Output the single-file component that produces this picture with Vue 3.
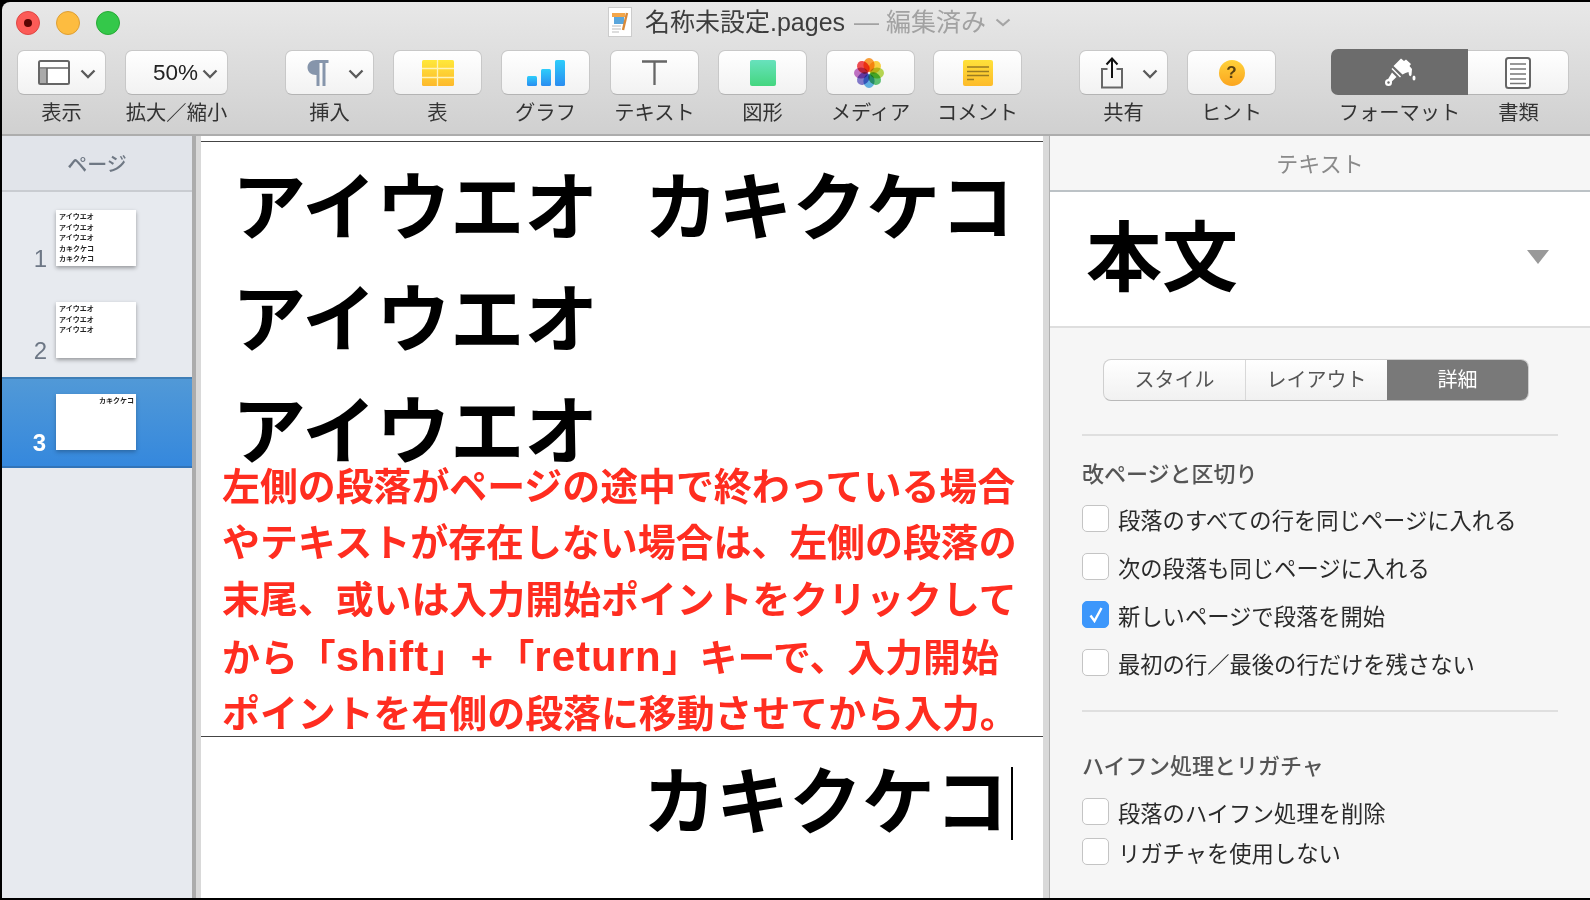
<script setup>
const tools = [
  { label: '表示', icon: 'view', chevron: true, w: 89, mr: 19 },
  { label: '拡大／縮小', icon: 'zoom', chevron: true, w: 103, mr: 57 },
  { label: '挿入', icon: 'para', chevron: true, w: 89, mr: 19 },
  { label: '表', icon: 'table', w: 89, mr: 19 },
  { label: 'グラフ', icon: 'chart', w: 89, mr: 20 },
  { label: 'テキスト', icon: 'text', w: 89, mr: 19 },
  { label: '図形', icon: 'shape', w: 89, mr: 19 },
  { label: 'メディア', icon: 'media', w: 89, mr: 18 },
  { label: 'コメント', icon: 'comment', w: 89, mr: 57 },
  { label: '共有', icon: 'share', chevron: true, w: 89, mr: 19 },
  { label: 'ヒント', icon: 'hint', w: 89, mr: 55 }
]
const petals = ['#fb9b2c', '#fdd23a', '#b6d84a', '#58c470', '#5cb2ea', '#7f76cf', '#c16bc4', '#f2454a']
const thumbs = [
  { n: 1, lines: ['アイウエオ', 'アイウエオ', 'アイウエオ', 'カキクケコ', 'カキクケコ'] },
  { n: 2, lines: ['アイウエオ', 'アイウエオ', 'アイウエオ'] },
  { n: 3, lines: ['カキクケコ'], right: true, selected: true }
]
const redLines = [
  [{ t: '左側の段落がページの途中で終わっている場合' }],
  [{ t: 'やテキストが存在しない場合は、左側の段落の' }],
  [{ t: '末尾、或いは入力開始ポイントをクリックして' }],
  [
    { t: 'から「' }, { t: 'shift', c: 'latin' }, { t: '」' }, { t: '+', c: 'plus' },
    { t: '「' }, { t: 'return', c: 'latin' }, { t: '」キーで、入力開始' }
  ],
  [{ t: 'ポイントを右側の段落に移動させてから入力。' }]
]
const breaks = [
  { t: '段落のすべての行を同じページに入れる' },
  { t: '次の段落も同じページに入れる' },
  { t: '新しいページで段落を開始', on: true },
  { t: '最初の行／最後の行だけを残さない' }
]
const hyph = ['段落のハイフン処理を削除', 'リガチャを使用しない']
</script>

<template>
  <div class="window">
    <header class="toolbar">
      <div class="titlebar">
        <div class="lights">
          <span class="light red"><i></i></span>
          <span class="light yellow"></span>
          <span class="light green"></span>
        </div>
        <div class="title">
          <svg class="docicon" width="24" height="30" viewBox="0 0 24 30">
            <rect x="0.5" y="0.5" width="23" height="29" fill="#fff" stroke="#ccc" />
            <rect x="4" y="6" width="13" height="4" fill="#f3a64a" />
            <rect x="6" y="10" width="10" height="7" fill="#5aa6dc" />
            <path d="M4 19h9M4 22h9M4 25h7" stroke="#bbb" stroke-width="1.2" />
            <path d="M19 6l-4 17" stroke="#d98a3a" stroke-width="2.4" />
          </svg>
          <span class="name">名称未設定.pages</span>
          <span class="dash">— 編集済み</span>
          <svg width="16" height="9" viewBox="0 0 16 9"><path d="M1.5 1.5L8 7l6.5-5.5" fill="none" stroke="#a5a5a5" stroke-width="2.2" /></svg>
        </div>
      </div>
      <div class="tools">
        <div v-for="t in tools" :key="t.label" class="tool" :style="{ width: t.w + 'px', marginRight: t.mr + 'px' }">
          <div class="btn" :class="{ 'has-chev': t.chevron }">
            <svg v-if="t.icon === 'view'" width="32" height="26" viewBox="0 0 32 26">
              <rect x="1" y="1" width="30" height="23" rx="1.5" fill="#fff" stroke="#666" stroke-width="2" />
              <rect x="2" y="9" width="7" height="14" fill="#aaa" />
              <path d="M1 8h30M9 8v16" stroke="#666" stroke-width="1.6" />
            </svg>
            <span v-else-if="t.icon === 'zoom'" class="zoomtxt">50%</span>
            <svg v-else-if="t.icon === 'para'" width="25" height="28" viewBox="0 0 24 28">
              <path d="M22 1H9.5C4.5 1 1 4 1 8.5S4.5 16 9.5 16H10V27h3V4h3v23h3V4h3z" fill="#8695ab" />
            </svg>
            <svg v-else-if="t.icon === 'table'" width="32" height="26" viewBox="0 0 32 26">
              <defs><linearGradient id="tg" x1="0" y1="0" x2="0" y2="1"><stop offset="0" stop-color="#ffe83a" /><stop offset="1" stop-color="#fdb92c" /></linearGradient></defs>
              <rect width="32" height="26" rx="1.5" fill="url(#tg)" />
              <path d="M15.5 0v26M0 8.5h32M0 17.5h32" stroke="#fff3b8" stroke-width="1.3" />
            </svg>
            <svg v-else-if="t.icon === 'chart'" width="38" height="26" viewBox="0 0 38 26">
              <defs><linearGradient id="cg" x1="0" y1="0" x2="0" y2="1"><stop offset="0" stop-color="#2ecdfb" /><stop offset="1" stop-color="#2a8df0" /></linearGradient></defs>
              <rect x="0" y="16" width="10" height="10" rx="1.5" fill="url(#cg)" />
              <rect x="14" y="9" width="10" height="17" rx="1.5" fill="url(#cg)" />
              <rect x="28" y="0" width="10" height="26" rx="1.5" fill="url(#cg)" />
            </svg>
            <svg v-else-if="t.icon === 'text'" width="26" height="26" viewBox="0 0 26 26">
              <path d="M0 1.5h25M12.5 1.5V25" stroke="#666" stroke-width="2.3" fill="none" />
            </svg>
            <span v-else-if="t.icon === 'shape'" class="shape"></span>
            <svg v-else-if="t.icon === 'media'" class="flower" width="30" height="30" viewBox="-15 -15 30 30">
              <g v-for="(c, i) in petals" :key="i" :transform="`rotate(${i * 45})`">
                <ellipse class="petal" cx="0" cy="-8" rx="5.600" ry="7" :fill="c" />
              </g>
            </svg>
            <svg v-else-if="t.icon === 'comment'" width="30" height="26" viewBox="0 0 30 26">
              <defs><linearGradient id="ng" x1="0" y1="0" x2="0" y2="1"><stop offset="0" stop-color="#ffe13a" /><stop offset="1" stop-color="#fdbb2a" /></linearGradient></defs>
              <rect width="30" height="26" rx="2" fill="url(#ng)" />
              <path d="M4 7h22M4 11.5h22M4 15.5h22M4 19.5h7" stroke="#9a7b22" stroke-width="1.7" />
            </svg>
            <svg v-else-if="t.icon === 'share'" width="24" height="32" viewBox="0 0 24 32">
              <path d="M7.5 12H2v18.500h20V12h-5.500" fill="none" stroke="#666" stroke-width="2" />
              <path d="M12 21V2M6.500 7.500L12 1.500l5.500 6" fill="none" stroke="#111" stroke-width="2" />
            </svg>
            <span v-else-if="t.icon === 'hint'" class="hint">?</span>
            <svg v-if="t.chevron" class="chev" width="16" height="10" viewBox="0 0 16 10"><path d="M1.5 1.500L8 8l6.500-6.500" fill="none" stroke="#5a5a5a" stroke-width="2.300" /></svg>
          </div>
          <span class="tool-label">{{ t.label }}</span>
        </div>
        <div class="seg-tool">
          <div class="seg-btns">
            <div class="seg-dark">
              <svg width="32" height="30" viewBox="0 0 32 30">
                <path d="M9.500 9L17 1.500l3 2.500 2-1.500 5 4.500-1.500 2 2.500 3-.5 6c-.5 1.500-2 1.500-2.500 0l-.5-3-3 1-3 1.500z" fill="#fff" />
                <path d="M7.500 12l8.500 8.500 1-1L8.500 11z" fill="#fff" />
                <path d="M8 15.500l4.500 4.500-6 5.800-3-2.800z" fill="#fff" />
                <circle cx="4.500" cy="25.500" r="3.500" fill="#fff" />
                <circle cx="4.500" cy="25.500" r="1.200" fill="#6c6c6c" />
                <ellipse cx="30" cy="21" rx="1.500" ry="2.500" fill="#fff" />
              </svg>
            </div>
            <div class="seg-light">
              <svg width="26" height="32" viewBox="0 0 26 32">
                <rect x="1" y="1" width="24" height="30" rx="2.500" fill="#fff" stroke="#666" stroke-width="2" />
                <path d="M5 7h16M5 12h16M5 17h16M5 22h16M5 26.500h16" stroke="#777" stroke-width="1.600" />
              </svg>
            </div>
          </div>
          <div class="seg-labels">
            <span class="tool-label lbl-a">フォーマット</span>
            <span class="tool-label lbl-b">書類</span>
          </div>
        </div>
      </div>
    </header>

    <div class="body">
      <aside class="sidebar">
        <div class="side-head">ページ</div>
        <div class="side-list">
          <div v-for="p in thumbs" :key="p.n" class="page-row" :class="{ selected: p.selected }">
            <span class="page-no">{{ p.n }}</span>
            <div class="thumb" :class="{ right: p.right }">
              <div v-for="(l, i) in p.lines" :key="i">{{ l }}</div>
            </div>
          </div>
        </div>
      </aside>

      <main class="canvas-wrap">
        <div class="canvas">
          <div class="page-part first">
            <div class="big"><span class="big-col">アイウエオ</span>カキクケコ</div>
            <div class="big">アイウエオ</div>
            <div class="big">アイウエオ</div>
            <div class="note">
              <div v-for="(l, i) in redLines" :key="i" class="note-line"><span v-for="(s, j) in l" :key="j" :class="s.c">{{ s.t }}</span></div>
            </div>
          </div>
          <div class="page-part second">
            <div class="big end">カキクケコ<span class="caret"></span></div>
          </div>
        </div>
      </main>

      <aside class="inspector">
        <div class="ins-head">テキスト</div>
        <div class="ins-style">
          <span class="style-name">本文</span>
          <span class="tri"></span>
        </div>
        <div class="ins-body">
          <div class="tabs">
            <span class="tab">スタイル</span>
            <span class="tab">レイアウト</span>
            <span class="tab active">詳細</span>
          </div>
          <div class="rule first-rule"></div>
          <h3 class="sec sec-a">改ページと区切り</h3>
          <div class="checks">
            <label v-for="b in breaks" :key="b.t" class="check">
              <span class="box" :class="{ on: b.on }">
                <svg v-if="b.on" width="16" height="17" viewBox="0 0 16 17"><path d="M2.500 9.500L6.500 15 13.500 2" fill="none" stroke="#fff" stroke-width="2.400" /></svg>
              </span>
              <span>{{ b.t }}</span>
            </label>
          </div>
          <div class="rule second-rule"></div>
          <h3 class="sec sec-b">ハイフン処理とリガチャ</h3>
          <div class="checks tight">
            <label v-for="h in hyph" :key="h" class="check">
              <span class="box"></span>
              <span>{{ h }}</span>
            </label>
          </div>
        </div>
      </aside>
    </div>
  </div>
</template>

<style>
html, body { margin: 0; background: #000; overflow: hidden; }
</style>

<style scoped>
.window {
  box-sizing: border-box;
  width: 1590px;
  height: 900px;
  padding: 2px 0 2px 2px;
  background: #000;
  display: flex;
  flex-direction: column;
  overflow: hidden;
  font-family: "Liberation Sans", "Noto Sans CJK JP", sans-serif;
  color: #333;
}
.toolbar {
  height: 134px;
  flex: none;
  box-sizing: border-box;
  border-bottom: 2px solid #adadad;
  background: linear-gradient(#e8e8e8, #d0d0d0);
  border-radius: 8px 0 0 0;
}
.titlebar { height: 48px; position: relative; }
.lights { position: absolute; left: 14px; top: 9px; display: flex; gap: 16px; }
.light { width: 24px; height: 24px; border-radius: 50%; box-sizing: border-box; display: flex; align-items: center; justify-content: center; }
.light.red { background: #fc5b57; border: 1px solid #df4744; }
.light.red i { width: 8px; height: 8px; border-radius: 50%; background: #5a0503; }
.light.yellow { background: #fdbc40; border: 1px solid #de9f34; }
.light.green { background: #34c84a; border: 1px solid #27aa35; }
.title { position: absolute; left: 606px; top: 5px; display: flex; align-items: center; height: 30px; font-size: 25px; white-space: nowrap; }
.docicon { margin-right: 13px; }
.name { color: #3d3d3d; padding-bottom: 4px; }
.dash { color: #a2a2a2; margin-left: 9px; margin-right: 9px; padding-bottom: 4px; }
.tools { display: flex; padding-left: 15px; }
.tool { display: flex; flex-direction: column; align-items: center; flex: none; }
.btn {
  width: 100%;
  height: 45px;
  box-sizing: border-box;
  border: 1px solid #c8c8c8;
  border-bottom-color: #b4b4b4;
  border-radius: 7px;
  background: linear-gradient(#ffffff, #f2f2f2);
  display: flex;
  align-items: center;
  justify-content: center;
  position: relative;
}
.btn.has-chev { justify-content: flex-start; padding-left: 20px; }
.chev { position: absolute; right: 9px; top: 18px; }
.zoomtxt { font-size: 22.500px; color: #222; padding-left: 7px; }
.shape { width: 26px; height: 26px; border-radius: 2px; background: linear-gradient(#68e2bd, #44d67f); }
.flower { margin-left: -3px; }
.petal { mix-blend-mode: multiply; fill-opacity: .95; }
.hint {
  width: 26px; height: 26px; border-radius: 50%;
  background: linear-gradient(#ffd23a, #fba51f);
  color: #5a4210; font-size: 17px; font-weight: 700;
  display: flex; align-items: center; justify-content: center;
}
.tool-label { margin-top: 5px; font-size: 20.300px; line-height: 26px; color: #333; white-space: nowrap; }
.seg-tool { flex: none; width: 238px; }
.seg-btns { display: flex; height: 46px; margin-top: -1px; }
.seg-dark { width: 137px; background: #6c6c6c; border-radius: 7px 0 0 7px; display: flex; align-items: center; justify-content: center; }
.seg-light {
  flex: 1; box-sizing: border-box; margin-top: 1px; height: 45px;
  background: linear-gradient(#fff, #f2f2f2);
  border: 1px solid #c8c8c8; border-left: none; border-bottom-color: #b4b4b4;
  border-radius: 0 7px 7px 0;
  display: flex; align-items: center; justify-content: center;
}
.seg-labels { display: flex; }
.lbl-a { width: 137px; text-align: center; }
.lbl-b { flex: 1; text-align: center; }

.body { flex: 1; display: flex; min-height: 0; }
.sidebar { width: 190px; flex: none; background: #e7eaef; display: flex; flex-direction: column; }
.side-head {
  height: 56px; box-sizing: border-box; flex: none;
  background: #e1e4ea; border-bottom: 2px solid #c9ccd1;
  display: flex; align-items: center; justify-content: center;
  font-size: 20px; font-weight: 500; color: #6f7884;
}
.side-list { padding-top: 18px; }
.page-row { height: 92px; box-sizing: border-box; display: flex; align-items: flex-start; position: relative; padding-left: 54px; }
.page-row.selected {
  height: 91px;
  margin-top: -17px;
  padding-top: 15px;
  background: linear-gradient(#5199d7, #3588dd);
  border-top: 2px solid #3f7fb7;
  border-bottom: 2px solid #3274b8;
}
.page-no { position: absolute; right: 145px; top: 35px; font-size: 24px; color: #6d7785; line-height: 28px; }
.selected .page-no { color: #fff; font-weight: 700; top: 50px; right: 146px; }
.thumb {
  width: 80px; height: 56px; box-sizing: border-box; background: #fff;
  box-shadow: 0 2px 4px rgba(0,0,0,.35);
  padding: 2px 3px; font-size: 7px; line-height: 10.500px; font-weight: 700; color: #222;
}
.thumb.right { text-align: right; padding-right: 2px; box-shadow: 0 2px 4px rgba(0,0,0,.25); }

.canvas-wrap {
  width: 857px; flex: none; box-sizing: border-box;
  border-left: 4px solid #acacac;
  border-right: 6px solid #d9d9d9;
  padding-left: 5px;
  background: #d9d9d9;
  display: flex;
}
.canvas { flex: 1; min-width: 0; background: #fff; padding-top: 5px; overflow: hidden; }
.page-part { border-top: 1px solid #444; position: relative; box-sizing: border-box; }
.first { height: 595px; padding-left: 31px; padding-top: 11px; }
.big { font-size: 74px; font-weight: 700; line-height: 112px; color: #000; white-space: nowrap; }
.big-col { margin-right: 46px; }
.note { position: absolute; left: 21px; top: 316.500px; }
.note-line { font-size: 37.900px; height: 56.800px; line-height: 56.800px; font-weight: 700; color: #ff2d20; white-space: nowrap; }
.latin { font-size: 42px; letter-spacing: 1px; font-weight: 700; }
.plus { padding: 0 3.500px; font-weight: 700; }
.second { padding-top: 10px; }
.end { display: flex; justify-content: flex-end; padding-right: 35px; position: relative; font-size: 73px; }
.caret { position: absolute; right: 30px; top: 20px; width: 2px; height: 73px; background: #000; }

.inspector { flex: 1; min-width: 0; background: #f6f6f6; display: flex; flex-direction: column; border-left: 1px solid #b0b0b0; }
.ins-head {
  height: 56px; box-sizing: border-box; flex: none; padding-bottom: 3px;
  border-bottom: 2px solid #bcc2c6;
  display: flex; align-items: center; justify-content: center;
  font-size: 22px; color: #8a8a8a;
}
.ins-style {
  height: 136px; flex: none; box-sizing: border-box; background: #fff;
  border-bottom: 2px solid #dedede;
  display: flex; align-items: center; justify-content: space-between;
  padding: 0 41px 0 36px;
}
.style-name { font-size: 76px; font-weight: 700; color: #000; line-height: 1; }
.tri { width: 0; height: 0; border-left: 11px solid transparent; border-right: 11px solid transparent; border-top: 14px solid #999; margin-bottom: 4px; }
.ins-body { padding: 31px 32px 0 32px; }
.tabs {
  display: flex; height: 42px; width: 426px; margin-left: 21px; box-sizing: border-box;
  border: 1px solid #cfcfcf; border-bottom-color: #b9b9b9; border-radius: 8px; overflow: hidden;
  background: linear-gradient(#fff, #f1f1f1); font-size: 20px; color: #555;
}
.tab { flex: 1; display: flex; align-items: center; justify-content: center; border-left: 1px solid #d8d8d8; padding-bottom: 3px; }
.tab:first-child { border-left: none; }
.tab.active { background: #797979; color: #fff; border-left: none; }
.rule { height: 2px; background: #dfdfdf; }
.first-rule { margin-top: 33px; }
.second-rule { margin-top: 34px; }
.sec { margin: 0; font-size: 22px; line-height: 26px; font-weight: 500; color: #555; }
.sec-a { margin-top: 26px; }
.sec-b { margin-top: 42px; }
.checks { margin-top: 17px; display: flex; flex-direction: column; gap: 21px; }
.checks.tight { gap: 13px; margin-top: 18px; }
.check { display: flex; align-items: center; gap: 9px; height: 27px; font-size: 22.300px; color: #2a2a2a; white-space: nowrap; }
.box {
  width: 27px; height: 27px; box-sizing: border-box; border-radius: 5px;
  border: 1px solid #c4c4c4; background: #fff; flex: none;
  display: flex; align-items: center; justify-content: center;
}
.box.on { background: #3d97fb; border-color: #3d97fb; }
</style>
